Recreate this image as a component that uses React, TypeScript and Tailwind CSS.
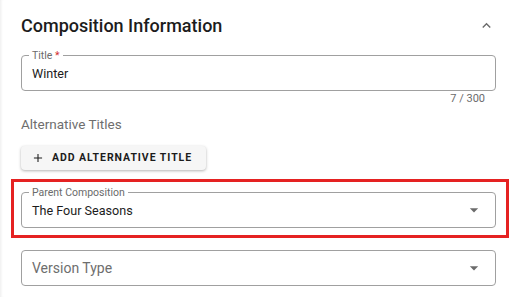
import React from 'react';

function DropArrow() {
  return (
    <svg viewBox="0 0 24 24" className="w-5 h-5 fill-[#6b6b6b]">
      <path d="M7 10l5 5 5-5z" />
    </svg>
  );
}

function OutlinedField({ label, value, select }: { label: React.ReactNode; value: string; select?: boolean }) {
  return (
    <div className="relative h-[36px] border border-[#a0a0a0] rounded-[4px] pl-[10px] pr-[11px] flex items-center justify-between">
      <span className="absolute -top-[6px] left-[7px] bg-white px-[3px] text-[10.5px] leading-[11px] text-[#6b6b6b]">
        {label}
      </span>
      <span className="text-[12.6px] leading-[15px] text-[#1c1c1c]">{value}</span>
      {select && <DropArrow />}
    </div>
  );
}

function App() {
  return (
    <div className="w-[518px] h-[297px] bg-white overflow-hidden font-['Roboto',sans-serif] shadow-[inset_3px_0_3px_-2px_rgba(0,0,0,0.08)]">
      <div className="h-[55px] pt-[15px] pl-[21px] pr-[23px] flex items-start justify-between">
        <h2 className="text-[18px] font-medium text-[#1c1c1c] leading-[21px]">Composition Information</h2>
        <svg viewBox="0 0 24 24" className="w-[17px] h-[17px] mt-[2px] fill-[#6b6b6b]">
          <path d="M12 8l-6 6 1.41 1.41L12 10.83l4.59 4.58L18 14z" />
        </svg>
      </div>

      <div className="pl-[21px] pr-[22px]">
        <OutlinedField label={<>Title <span className="text-[#d32f2f]">*</span></>} value="Winter" />
        <div className="mt-[1px] text-right text-[11px] leading-[13px] text-[#6b6b6b] pr-[11px]">7 / 300</div>

        <div className="mt-[11px] text-[13.5px] leading-[16px] text-[#6e6e6e]">Alternative Titles</div>

        <button className="mt-[14px] h-[24px] w-[185px] flex items-center whitespace-nowrap pl-[10px] bg-[#f6f6f6] rounded-[4px] shadow-[0_1px_3px_rgba(0,0,0,0.3)]">
          <svg viewBox="0 0 24 24" className="w-[14px] h-[14px] shrink-0" fill="none" stroke="#1c1c1c" strokeWidth="1.8">
            <path d="M12 5v14M5 12h14" />
          </svg>
          <span className="ml-[7px] text-[10.5px] font-bold tracking-[0.95px] text-[#1c1c1c] leading-none">ADD ALTERNATIVE TITLE</span>
        </button>
      </div>

      <div className="ml-[11px] mt-[9px] w-[498px] h-[59px] border-[3px] border-[#e52222] pl-[7px] pr-[10px] pt-[10px]">
        <OutlinedField label="Parent Composition" value="The Four Seasons" select />
      </div>

      <div className="pl-[21px] pr-[22px] mt-[12px]">
        <div className="h-[36px] border border-[#a0a0a0] rounded-[4px] pl-[10px] pr-[11px] flex items-center justify-between">
          <span className="text-[14px] leading-[16px] text-[#6e6e6e]">Version Type</span>
          <DropArrow />
        </div>
      </div>
    </div>
  );
}

export default App;
